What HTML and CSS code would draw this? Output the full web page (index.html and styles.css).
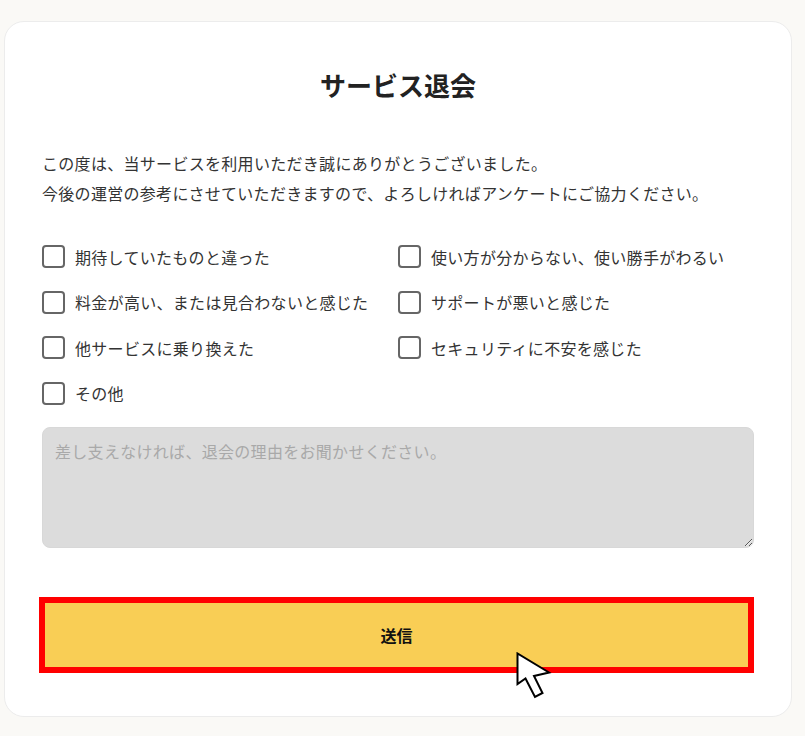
FILE: index.html
```html
<!DOCTYPE html>
<html lang="ja">

<head>
    <meta charset="UTF-8">
    <meta name="viewport" content="width=device-width, initial-scale=1.0">
    <title>サービス退会</title>
    <link rel="stylesheet" href="styles.css">
</head>

<body>
    <form class="card">
        <h1 class="title">サービス退会</h1>

        <p class="lead">
            この度は、当サービスを利用いただき誠にありがとうございました。<br>
            今後の運営の参考にさせていただきますので、よろしければアンケートにご協力ください。
        </p>

        <div class="reasons">
            <label class="reason"><input type="checkbox"><span>期待していたものと違った</span></label>
            <label class="reason"><input type="checkbox"><span>使い方が分からない、使い勝手がわるい</span></label>
            <label class="reason"><input type="checkbox"><span>料金が高い、または見合わないと感じた</span></label>
            <label class="reason"><input type="checkbox"><span>サポートが悪いと感じた</span></label>
            <label class="reason"><input type="checkbox"><span>他サービスに乗り換えた</span></label>
            <label class="reason"><input type="checkbox"><span>セキュリティに不安を感じた</span></label>
            <label class="reason"><input type="checkbox"><span>その他</span></label>
        </div>

        <textarea class="comment" placeholder="差し支えなければ、退会の理由をお聞かせください。"></textarea>

        <div class="submit-wrap">
            <button type="button" class="submit">送信</button>
            <!-- mouse pointer -->
            <svg class="pointer" width="36" height="48" viewBox="0 0 36 48">
                <polygon points="1.5,1.5 1.5,32 9.5,26.5 19,45 26.5,41 18,24 33,20.5"
                    fill="#fff" stroke="#000" stroke-width="2" stroke-linejoin="miter" />
            </svg>
        </div>
    </form>
</body>

</html>
```

FILE: styles.css
```css
/* service cancel form */

body {
    margin: 0;
    padding: 21px 0 0 4px;
    background: #faf9f6;
    font-family: "Noto Sans CJK JP", "Noto Sans", sans-serif;
    color: #333;
}

.card {
    width: 788px;
    box-sizing: border-box;
    padding: 45px 37px 43px;
    background: #fff;
    border: 1px solid #ececec;
    border-radius: 20px;
}

.title {
    margin: 0;
    font-size: 26px;
    line-height: 36px;
    font-weight: bold;
    text-align: center;
    color: #222;
}

.lead {
    margin: 45px 0 0;
    font-size: 16px;
    line-height: 30px;
    letter-spacing: 0.3px;
}

/* reasons */

.reasons {
    display: grid;
    grid-template-columns: 1fr 1fr;
    grid-auto-rows: 23px;
    row-gap: 22.6px;
    margin-top: 37px;
}

.reason {
    display: flex;
    align-items: center;
    gap: 10px;
    font-size: 16px;
    line-height: 22px;
    letter-spacing: 0.3px;
    color: #333;
}

.reason input {
    appearance: none;
    -webkit-appearance: none;
    flex: none;
    width: 23px;
    height: 23px;
    margin: 0;
    border: 2px solid #666;
    border-radius: 4px;
    background: #fff;
}

/* comment */

.comment {
    display: block;
    width: 100%;
    height: 121px;
    box-sizing: border-box;
    margin-top: 22px;
    padding: 11px 12px;
    font-family: inherit;
    font-size: 16px;
    line-height: 24px;
    letter-spacing: 0.3px;
    color: #333;
    background: #dcdcdc;
    border: 1px solid #d8d8d8;
    border-radius: 8px;
    resize: vertical;
}

.comment::placeholder {
    color: #a9a9a9;
}

/* submit */

.submit-wrap {
    position: relative;
    margin-top: 49px;
    margin-left: -3px;
}

.submit {
    display: block;
    width: 100%;
    height: 76px;
    box-sizing: border-box;
    padding: 0;
    font-family: inherit;
    font-size: 16px;
    font-weight: bold;
    color: #111;
    background: #f9ce55;
    border: 6px solid #ff0000;
    border-radius: 0;
}

.pointer {
    position: absolute;
    left: 477px;
    top: 55px;
}
```
